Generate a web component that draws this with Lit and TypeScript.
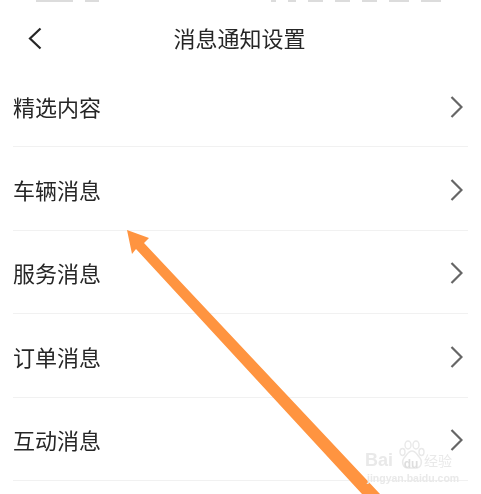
import { LitElement, html, css, svg } from "lit";
import { customElement } from "lit/decorators.js";

const ROWS = ["精选内容", "车辆消息", "服务消息", "订单消息", "互动消息"];
const STATUS_LEFT = [37, 14];
const STATUS_RIGHT = [5, 8, 15, 15, 15, 20, 20];

@customElement("app-root")
export class AppRoot extends LitElement {
  static styles = css`
    :host {
      display: block;
      position: relative;
      width: 481px;
      height: 494px;
      overflow: hidden;
      background: #fff;
      font-family: "Noto Sans CJK SC", "Liberation Sans", sans-serif;
      color: #262626;
    }
    .soft { filter: blur(0.45px); }
    .status {
      height: 2px;
      display: flex;
      justify-content: space-between;
      padding: 0 40px 0 36px;
    }
    .group { display: flex; gap: 12px; }
    .status i { display: block; height: 2px; background: #dcdcdc; }
    .nav {
      height: 62px;
      box-sizing: border-box;
      padding: 20px 15px 12px 13px;
      display: grid;
      grid-template-columns: 1fr auto 1fr;
      align-items: center;
    }
    .nav h1 {
      margin: 0 0 3px;
      font-size: 22px;
      font-weight: 400;
      line-height: 30px;
    }
    .back { margin-left: 14px; }
    .list { padding: 0 13px; }
    .row {
      height: 83.4px;
      box-sizing: border-box;
      padding: 3px 5px 0 0;
      border-bottom: 1px solid #f1f1f1;
      display: flex;
      align-items: center;
      justify-content: space-between;
      font-size: 22px;
    }
    .row span { margin-bottom: 2px; }
    svg { display: block; }
    .overlay { position: absolute; left: 0; top: 0; pointer-events: none; }
    .mark {
      position: absolute;
      left: 365px;
      top: 440px;
      width: 90px;
      height: 44px;
      color: #e9e9e9;
      pointer-events: none;
    }
    .top {
      position: absolute;
      left: 0;
      top: 9px;
      display: flex;
      align-items: center;
      font-family: "Liberation Sans", sans-serif;
      font-size: 18px;
      font-weight: 700;
      line-height: 22px;
    }
    .du { margin-left: 8px; font-size: 12px; width: 20px; text-align: center; position: relative; top: 4px; color: #dedede; }
    .cn { font-family: "Noto Sans CJK SC", sans-serif; font-size: 14px; font-weight: 400; line-height: 16px; margin-left: 3px; }
    .url {
      position: absolute;
      left: 2px;
      top: 32px;
      font-family: "Liberation Sans", sans-serif;
      font-size: 10.5px;
      font-weight: 700;
      line-height: 12px;
      white-space: nowrap;
    }
    .paw { position: absolute; left: 34px; top: 0; }
  `;

  render() {
    return html`
      <div class="soft">
        <div class="status">
          <div class="group">${STATUS_LEFT.map((w) => html`<i style="width:${w}px"></i>`)}</div>
          <div class="group">${STATUS_RIGHT.map((w) => html`<i style="width:${w}px"></i>`)}</div>
        </div>
        <div class="nav">
          <svg class="back" width="16" height="23" viewBox="0 0 16 23" fill="none" stroke="#262626" stroke-width="2.2">
            <path d="M13.5 1.5 L3 11.5 L13.5 21.5" />
          </svg>
          <h1>消息通知设置</h1>
          <span></span>
        </div>
        <div class="list">
          ${ROWS.map(
            (r) => html`<div class="row">
              <span>${r}</span>
              <svg width="13" height="22" viewBox="0 0 13 22" fill="none" stroke="#666" stroke-width="2.2">
                <path d="M1.5 1 L11.5 11 L1.5 21" />
              </svg>
            </div>`
          )}
        </div>
        <svg class="overlay" width="481" height="494" viewBox="0 0 481 494">
          ${svg`<path d="M127 230 L149 238 L144 243 L380 494 L362 494 L136 249 L132 254 Z" fill="#ff9440" />`}
        </svg>
        <div class="mark">
          <svg class="paw" width="26" height="30" viewBox="0 0 26 30" fill="#fff" stroke="#e9e9e9" stroke-width="1.4">
            <ellipse cx="9" cy="5" rx="3" ry="4" />
            <ellipse cx="17" cy="5" rx="3" ry="4" />
            <ellipse cx="3.5" cy="12" rx="2.5" ry="3.5" />
            <ellipse cx="22.5" cy="12" rx="2.5" ry="3.5" />
            <path d="M13 11 C9 11 8 15 5 18 C2 22 4 28 9 28 C11 28 15 28 17 28 C22 28 24 22 21 18 C18 15 17 11 13 11 Z" />
          </svg>
          <div class="top"><span>Bai</span><span class="du">du</span><span class="cn">经验</span></div>
          <div class="url">jingyan.baidu.com</div>
        </div>
      </div>
    `;
  }
}
